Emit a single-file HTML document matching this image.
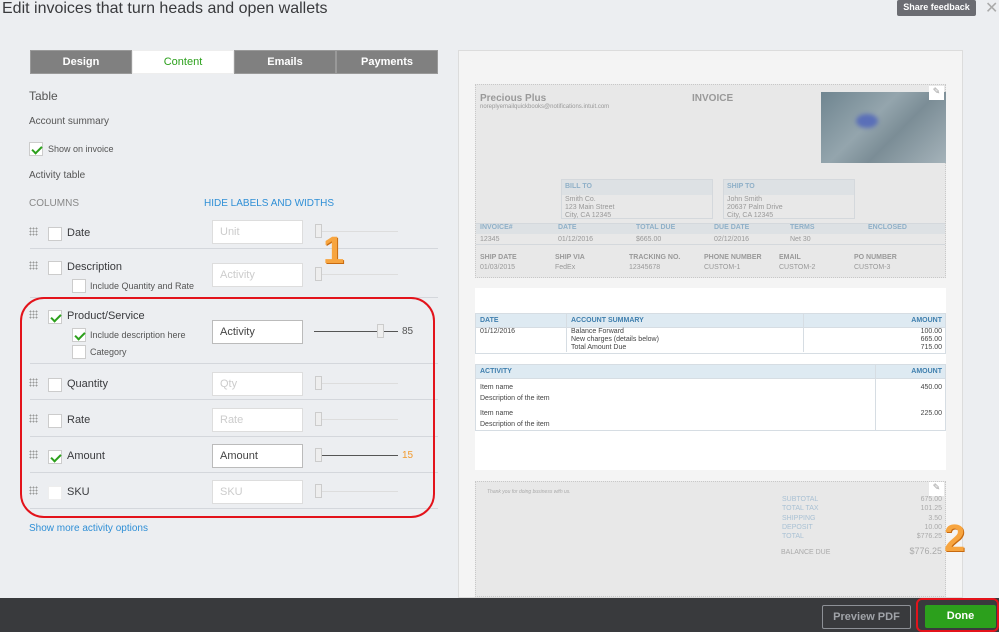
<!DOCTYPE html>
<html><head><meta charset="utf-8"><style>
*{box-sizing:border-box;margin:0;padding:0}
body{width:999px;height:632px;overflow:hidden;background:#eceef1;font-family:"Liberation Sans",sans-serif;position:relative;color:#393a3d}
.a{position:absolute}
.tab{position:absolute;top:50px;height:24px;width:102px;background:#808080;color:#fff;font-size:11px;font-weight:bold;text-align:center;line-height:22px;border:1px solid #999}
.lbl{font-size:11px;color:#555}
.cb{position:absolute;width:14px;height:14px;background:#fff;border:1px solid #ccc}
.cb.on::after{content:"";position:absolute;left:4px;top:1px;width:4px;height:8px;border:solid #2ca01c;border-width:0 2px 2px 0;transform:rotate(45deg)}
.grip{position:absolute;width:9px;height:9px;background:radial-gradient(circle,#999 0.8px,transparent 1px) 0 0/3px 3px}
.inp{position:absolute;left:212px;width:91px;height:24px;background:#fff;border:1px solid #ddd;font-size:11px;color:#ccc;padding:5px 7px}
.inp.on{border-color:#bbb;color:#444}
.sl{position:absolute;left:318px;width:80px;height:1px;background:#ddd}
.sl.on{background:#555}
.th{position:absolute;width:7px;height:14px;background:#eee;border:1px solid #ccc;top:-7px}
.sep{position:absolute;left:30px;width:408px;height:1px;background:#d4d7dc}
.rl{position:absolute;left:67px;font-size:11px;color:#393a3d}
.sm{font-size:7px;color:#999}
.hd{color:#8fb0c8;font-size:7px;font-weight:bold}
</style></head><body>
<div class="a" style="left:2px;top:0;font-size:16px;color:#393a3d">Edit invoices that turn heads and open wallets</div>
<div class="a" style="left:897px;top:0;width:79px;height:16px;background:#6b6c72;color:#fff;font-size:9px;font-weight:bold;text-align:center;line-height:15px;border-radius:2px">Share feedback</div>
<div class="a" style="left:985px;top:-2px;font-size:16px;color:#aaa">✕</div>

<div class="tab" style="left:30px">Design</div>
<div class="tab" style="left:132px;background:#fff;color:#2ca01c;border-color:#eee;font-weight:normal">Content</div>
<div class="tab" style="left:234px">Emails</div>
<div class="tab" style="left:336px">Payments</div>

<div class="a lbl" style="left:29px;top:89px;font-size:12px">Table</div>
<div class="a lbl" style="left:29px;top:116px;font-size:10px">Account summary</div>
<div class="cb on" style="left:29px;top:142px"></div>
<div class="a lbl" style="left:48px;top:144px;font-size:9px">Show on invoice</div>
<div class="a lbl" style="left:29px;top:170px;font-size:10px">Activity table</div>
<div class="a lbl" style="left:29px;top:198px;font-size:10px;color:#888">COLUMNS</div>
<div class="a" style="left:204px;top:198px;font-size:10px;color:#2f8fd6">HIDE LABELS AND WIDTHS</div>

<div class="grip" style="left:29px;top:227px"></div><div class="cb" style="left:48px;top:227px"></div><div class="rl" style="top:227px">Date</div>
<div class="inp" style="top:220px">Unit</div><div class="sl" style="top:231px"><div class="th" style="left:-3px"></div></div>
<div class="sep" style="top:248px"></div>

<div class="grip" style="left:29px;top:261px"></div><div class="cb" style="left:48px;top:261px"></div><div class="rl" style="top:261px">Description</div>
<div class="cb" style="left:72px;top:279px"></div><div class="a" style="left:90px;top:281px;font-size:9px;color:#555">Include Quantity and Rate</div>
<div class="inp" style="top:263px">Activity</div><div class="sl" style="top:274px"><div class="th" style="left:-3px"></div></div>
<div class="sep" style="top:297px"></div>

<div class="grip" style="left:29px;top:310px"></div><div class="cb on" style="left:48px;top:310px"></div><div class="rl" style="top:310px">Product/Service</div>
<div class="cb on" style="left:72px;top:328px"></div><div class="a" style="left:90px;top:330px;font-size:9px;color:#555">Include description here</div>
<div class="cb" style="left:72px;top:345px"></div><div class="a" style="left:90px;top:347px;font-size:9px;color:#555">Category</div>
<div class="inp on" style="top:320px">Activity</div><div class="sl on" style="left:314px;width:84px;top:331px"><div class="th" style="left:63px"></div></div>
<div class="a" style="left:402px;top:326px;font-size:10px;color:#555">85</div>
<div class="sep" style="top:363px"></div>

<div class="grip" style="left:29px;top:378px"></div><div class="cb" style="left:48px;top:378px"></div><div class="rl" style="top:378px">Quantity</div>
<div class="inp" style="top:372px">Qty</div><div class="sl" style="top:383px"><div class="th" style="left:-3px"></div></div>
<div class="sep" style="top:399px"></div>

<div class="grip" style="left:29px;top:414px"></div><div class="cb" style="left:48px;top:414px"></div><div class="rl" style="top:414px">Rate</div>
<div class="inp" style="top:408px">Rate</div><div class="sl" style="top:419px"><div class="th" style="left:-3px"></div></div>
<div class="sep" style="top:436px"></div>

<div class="grip" style="left:29px;top:450px"></div><div class="cb on" style="left:48px;top:450px"></div><div class="rl" style="top:450px">Amount</div>
<div class="inp on" style="top:444px">Amount</div><div class="sl on" style="top:455px"><div class="th" style="left:-3px"></div></div>
<div class="a" style="left:402px;top:450px;font-size:10px;color:#f29a2e">15</div>
<div class="sep" style="top:472px"></div>

<div class="grip" style="left:29px;top:486px"></div><div class="cb" style="left:48px;top:486px;border-color:#eee"></div><div class="rl" style="top:486px">SKU</div>
<div class="inp" style="top:480px">SKU</div><div class="sl" style="top:491px"><div class="th" style="left:-3px"></div></div>
<div class="sep" style="top:508px"></div>
<div class="a" style="left:29px;top:523px;font-size:10px;color:#2f8fd6">Show more activity options</div>

<div class="a" style="left:20px;top:297px;width:415px;height:221px;border:2px solid #e3131b;border-radius:24px"></div>
<div class="a" style="left:323px;top:230px;font-size:38px;font-weight:bold;color:#f7a540;text-shadow:1px 1px 0 #c76a10">1</div>

<div class="a" style="left:458px;top:50px;width:505px;height:548px;background:#f4f4f4;border:1px solid #dcdcdc"></div>
<div class="a" style="left:475px;top:84px;width:471px;height:194px;background:#e8e8e8;border:1px dotted #c8c8c8"></div>
<div class="a" style="left:480px;top:93px;font-size:10px;font-weight:bold;color:#999">Precious Plus</div>
<div class="a sm" style="left:480px;top:104px;font-size:6px">noreplyemailquickbooks@notifications.intuit.com</div>
<div class="a" style="left:692px;top:93px;font-size:10px;font-weight:bold;color:#999">INVOICE</div>
<div class="a" style="left:821px;top:92px;width:125px;height:71px;background:linear-gradient(135deg,#6f8590,#94a5ad 40%,#7b8d96 60%,#a5b3ba);"><div class="a" style="left:35px;top:22px;width:22px;height:14px;background:#5a6fb8;border-radius:50%;filter:blur(2px)"></div></div>
<div class="a" style="left:929px;top:86px;width:15px;height:14px;background:#fff;font-size:9px;color:#999;text-align:center">✎</div>
<div class="a" style="left:561px;top:179px;width:152px;height:40px;border:1px solid #d4d8dc;background:#e8e8e8"><div style="height:15px;background:#dde1e4;padding:3px" class="hd">BILL TO</div><div class="sm" style="padding:1px 3px;line-height:8px">Smith Co.<br>123 Main Street<br>City, CA 12345</div></div>
<div class="a" style="left:723px;top:179px;width:132px;height:40px;border:1px solid #d4d8dc;background:#e8e8e8"><div style="height:15px;background:#dde1e4;padding:3px" class="hd">SHIP TO</div><div class="sm" style="padding:1px 3px;line-height:8px">John Smith<br>20637 Palm Drive<br>City, CA 12345</div></div>
<div class="a" style="left:476px;top:223px;width:469px;height:22px;border-top:1px solid #d4d8dc;border-bottom:1px solid #d4d8dc">
<div style="height:10px;background:#dde1e4;display:flex" class="hd"><span style="width:78px;padding-left:4px">INVOICE#</span><span style="width:78px;padding-left:4px">DATE</span><span style="width:78px;padding-left:4px">TOTAL DUE</span><span style="width:76px;padding-left:4px">DUE DATE</span><span style="width:78px;padding-left:4px">TERMS</span><span style="padding-left:4px">ENCLOSED</span></div>
<div class="sm" style="display:flex;padding-top:2px"><span style="width:78px;padding-left:4px">12345</span><span style="width:78px;padding-left:4px">01/12/2016</span><span style="width:78px;padding-left:4px">$665.00</span><span style="width:76px;padding-left:4px">02/12/2016</span><span style="width:78px;padding-left:4px">Net 30</span></div></div>
<div class="a" style="left:480px;top:253px;width:460px;display:flex;font-size:7px;color:#999;line-height:10px">
<div style="width:75px"><b>SHIP DATE</b><br>01/03/2015</div><div style="width:74px"><b>SHIP VIA</b><br>FedEx</div><div style="width:75px"><b>TRACKING NO.</b><br>12345678</div><div style="width:75px"><b>PHONE NUMBER</b><br>CUSTOM-1</div><div style="width:75px"><b>EMAIL</b><br>CUSTOM-2</div><div><b>PO NUMBER</b><br>CUSTOM-3</div></div>

<div class="a" style="left:475px;top:288px;width:471px;height:182px;background:#fff"></div>
<div class="a" style="left:475px;top:313px;width:471px;height:41px;border:1px solid #d6dde3;font-size:7px;color:#444">
<div style="height:14px;background:#deeaf2;display:flex;color:#3f7fae;font-weight:bold;line-height:14px;border-bottom:1px solid #d6dde3"><span style="width:91px;padding-left:4px;border-right:1px solid #d6dde3">DATE</span><span style="width:237px;padding-left:4px;border-right:1px solid #d6dde3">ACCOUNT SUMMARY</span><span style="flex:1;text-align:right;padding-right:3px">AMOUNT</span></div>
<div style="display:flex;line-height:8px"><span style="width:91px;padding-left:4px;border-right:1px solid #d6dde3">01/12/2016</span><span style="width:237px;padding-left:4px;border-right:1px solid #d6dde3">Balance Forward<br>New charges (details below)<br>Total Amount Due</span><span style="flex:1;text-align:right;padding-right:3px">100.00<br>665.00<br>715.00</span></div></div>
<div class="a" style="left:475px;top:364px;width:471px;height:67px;border:1px solid #d6dde3;font-size:7px;color:#444">
<div style="height:14px;background:#deeaf2;display:flex;color:#3f7fae;font-weight:bold;line-height:14px;border-bottom:1px solid #d6dde3"><span style="width:400px;padding-left:4px;border-right:1px solid #d6dde3">ACTIVITY</span><span style="flex:1;text-align:right;padding-right:3px">AMOUNT</span></div>
<div style="display:flex;line-height:11px;height:51px"><span style="width:400px;padding:3px 4px;border-right:1px solid #d6dde3">Item name<br>Description of the item<br><span style="display:block;height:4px"></span>Item name<br>Description of the item</span><span style="flex:1;text-align:right;padding:3px 3px">450.00<br><br><span style="display:block;height:4px"></span>225.00</span></div></div>

<div class="a" style="left:475px;top:481px;width:471px;height:116px;background:#e8e8e8;border:1px dotted #c8c8c8"></div>
<div class="a" style="left:487px;top:489px;font-size:5px;font-style:italic;color:#aaa">Thank you for doing business with us.</div>
<div class="a" style="left:929px;top:482px;width:15px;height:14px;background:#fff;font-size:9px;color:#999;text-align:center">✎</div>
<div class="a" style="left:782px;top:495px;font-size:7px;color:#a9c1d4;line-height:9.3px">SUBTOTAL<br>TOTAL TAX<br>SHIPPING<br>DEPOSIT<br>TOTAL</div>
<div class="a" style="left:890px;top:495px;width:52px;text-align:right;font-size:7px;color:#aaa;line-height:9.3px">675.00<br>101.25<br>3.50<br>10.00<br>$776.25</div>
<div class="a" style="left:781px;top:549px;font-size:7px;color:#aaa">BALANCE DUE</div>
<div class="a" style="left:890px;top:546px;width:52px;text-align:right;font-size:9px;color:#aaa">$776.25</div>
<div class="a" style="left:944px;top:518px;font-size:38px;font-weight:bold;color:#f7a540;text-shadow:1px 1px 0 #c76a10">2</div>

<div class="a" style="left:0;top:598px;width:999px;height:34px;background:#393a3d"></div>
<div class="a" style="left:822px;top:605px;width:89px;height:24px;border:1px solid #8d9096;color:#a0a3a8;font-size:11px;font-weight:bold;text-align:center;line-height:22px;border-radius:2px">Preview PDF</div>
<div class="a" style="left:916px;top:598px;width:83px;height:34px;border:2px solid #e3131b;border-radius:6px"></div>
<div class="a" style="left:925px;top:605px;width:71px;height:23px;background:#2ca01c;color:#fff;font-size:11px;font-weight:bold;text-align:center;line-height:23px;border-radius:2px">Done</div>
</body></html>
